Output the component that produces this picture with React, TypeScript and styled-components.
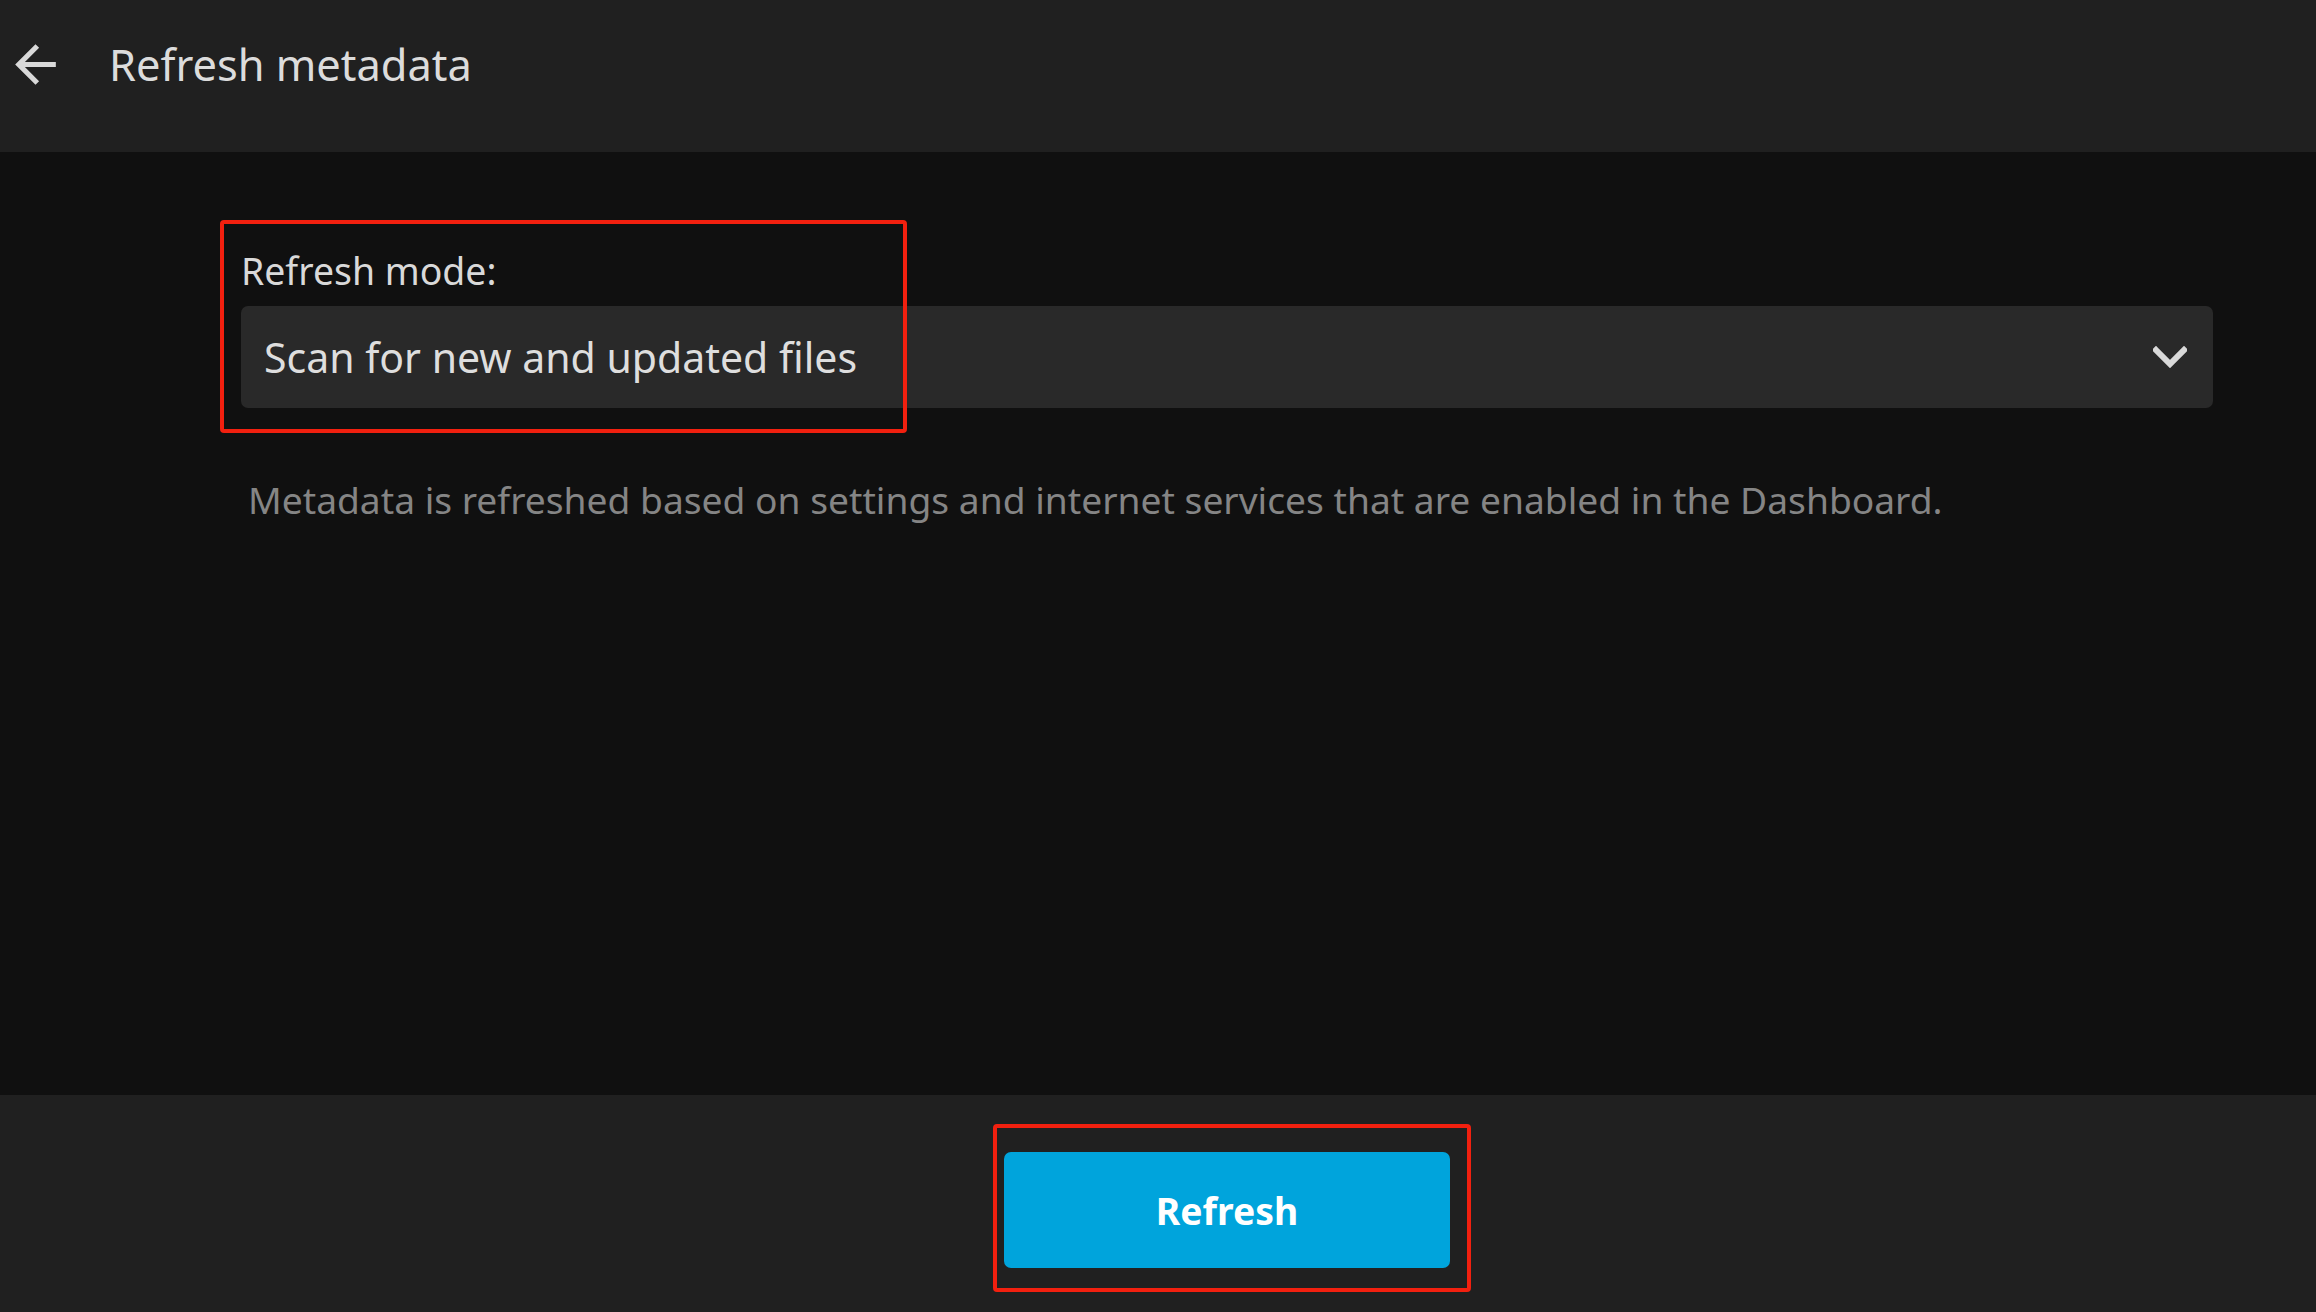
import React from "react";
import styled, { createGlobalStyle } from "styled-components";

const GlobalStyle = createGlobalStyle`
  html, body {
    margin: 0;
    padding: 0;
    background: #101010;
    font-family: "Noto Sans", "Open Sans", sans-serif;
    -webkit-font-smoothing: antialiased;
  }
  * { box-sizing: border-box; }
`;

const Page = styled.div`
  display: flex;
  flex-direction: column;
  width: 2316px;
  height: 1312px;
  overflow: hidden;
  background: #101010;
`;

const Header = styled.header`
  flex: 0 0 152px;
  display: flex;
  align-items: flex-start;
  background: #202020;
`;

const HeaderRow = styled.div`
  height: 128px;
  display: flex;
  align-items: center;
`;

const BackButton = styled.button`
  width: 61px;
  height: 61px;
  margin-left: 5px;
  padding: 0;
  border: none;
  background: transparent;
  color: #d9d9d9;
  display: flex;
  align-items: center;
  justify-content: center;
  cursor: pointer;
  svg { display: block; }
`;

const Title = styled.h1`
  margin: 0 0 0 43px;
  font-size: 43.4px;
  font-weight: 400;
  line-height: normal;
  color: #dcdcdc;
`;

const Content = styled.main`
  position: relative;
  flex: 1 1 auto;
  padding: 93px 103px 0 241px;
  background: #101010;
`;

const Label = styled.label`
  display: block;
  font-size: 37.4px;
  line-height: normal;
  color: #d9d9d9;
  margin-bottom: 10px;
`;

const Select = styled.div`
  height: 102px;
  display: flex;
  align-items: center;
  justify-content: space-between;
  padding: 0 26px 0 23px;
  background: #292929;
  border-radius: 7px;
  font-size: 41px;
  color: #dedede;
`;

const Description = styled.p`
  margin: 66px 0 0 7px;
  font-size: 37.2px;
  line-height: normal;
  color: #858585;
`;

const Footer = styled.footer`
  flex: 0 0 217px;
  display: flex;
  justify-content: center;
  align-items: flex-start;
  padding: 57px 0 0 138px;
  background: #202020;
`;

const ButtonWrap = styled.div`
  position: relative;
`;

const PrimaryButton = styled.button`
  width: 446px;
  height: 116px;
  border: none;
  border-radius: 7px;
  background: #00a4dc;
  color: #ffffff;
  font-family: "Noto Sans", "Open Sans", sans-serif;
  font-weight: 700;
  font-size: 37.3px;
  cursor: pointer;
`;

const Annotation = styled.div<{ $top: number; $left: number; $width: number; $height: number }>`
  position: absolute;
  top: ${(p) => p.$top}px;
  left: ${(p) => p.$left}px;
  width: ${(p) => p.$width}px;
  height: ${(p) => p.$height}px;
  border: 4px solid #f2200f;
  border-radius: 4px;
  pointer-events: none;
`;

const BackIcon = () => (
  <svg width="61" height="61" viewBox="0 0 24 24" fill="currentColor">
    <path d="M20 11H7.83l5.59-5.59L12 4l-8 8 8 8 1.41-1.41L7.83 13H20v-2z" />
  </svg>
);

const Chevron = () => (
  <svg width="34" height="22" viewBox="0 0 34 22" fill="none">
    <polyline points="3,4 17,18 31,4" stroke="#d9d9d9" strokeWidth="6" strokeLinecap="square" />
  </svg>
);

export default function App() {
  return (
    <>
      <GlobalStyle />
      <Page>
        <Header>
          <HeaderRow>
            <BackButton aria-label="Back">
              <BackIcon />
            </BackButton>
            <Title>Refresh metadata</Title>
          </HeaderRow>
        </Header>
        <Content>
          <Label>Refresh mode:</Label>
          <Select>
            <span>Scan for new and updated files</span>
            <Chevron />
          </Select>
          <Description>
            Metadata is refreshed based on settings and internet services that are enabled in the Dashboard.
          </Description>
          <Annotation $top={68} $left={220} $width={687} $height={213} />
        </Content>
        <Footer>
          <ButtonWrap>
            <PrimaryButton>Refresh</PrimaryButton>
            <Annotation $top={-28} $left={-11} $width={478} $height={168} />
          </ButtonWrap>
        </Footer>
      </Page>
    </>
  );
}
